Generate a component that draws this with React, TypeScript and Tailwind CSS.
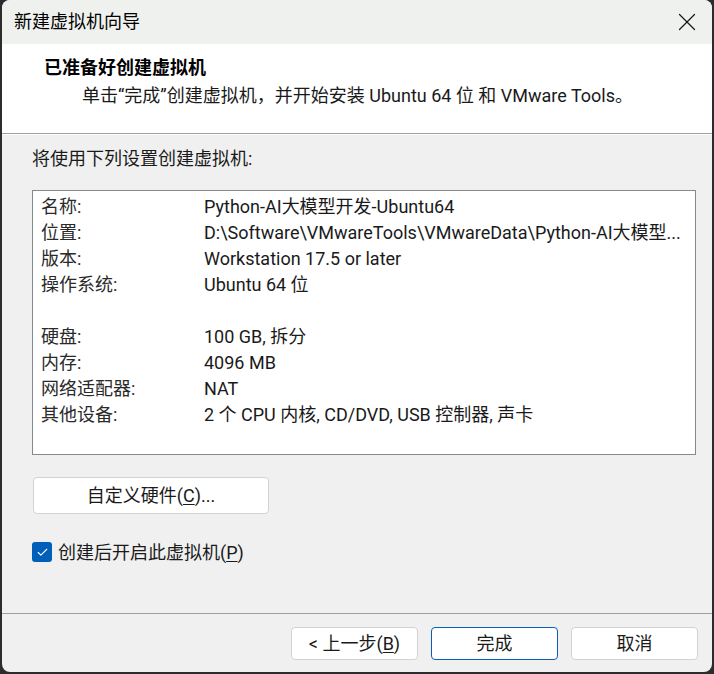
import { X, Check } from "lucide-react"

const font = { fontFamily: 'Roboto, "Noto Sans CJK SC", sans-serif' }

const rows: [string, string][] = [
  ["名称:", "Python-AI大模型开发-Ubuntu64"],
  ["位置:", "D:\\Software\\VMwareTools\\VMwareData\\Python-AI大模型..."],
  ["版本:", "Workstation 17.5 or later"],
  ["操作系统:", "Ubuntu 64 位"],
  ["", ""],
  ["硬盘:", "100 GB, 拆分"],
  ["内存:", "4096 MB"],
  ["网络适配器:", "NAT"],
  ["其他设备:", "2 个 CPU 内核, CD/DVD, USB 控制器, 声卡"],
]

function Btn({ children, primary }: { children: React.ReactNode; primary?: boolean }) {
  return (
    <button
      className={`w-[127px] h-[33px] rounded-[4px] bg-white text-[18px] leading-none text-[#1a1a1a] flex items-center justify-center ${
        primary ? "border border-[#0a5fb4]" : "border border-[#d3d3d3]"
      }`}
    >
      {children}
    </button>
  )
}

export default function App() {
  return (
    <div className="w-[714px] h-[674px] bg-[#2c2c2c] pl-[2px] pr-[2px] pb-[2px]" style={font}>
      <div className="w-[710px] h-[672px] rounded-[8px] overflow-hidden bg-[#f0f0f0] flex flex-col">
        {/* title bar */}
        <div className="h-[44px] bg-[#eff1ef] flex items-center justify-between pl-[12px] pr-[10px]">
          <span className="text-[18px] text-black leading-none">新建虚拟机向导</span>
          <X size={30} strokeWidth={1} className="text-[#1a1a1a]" />
        </div>

        {/* header */}
        <div className="h-[90px] bg-white pt-[12px] border-b border-[#a0a0a0]">
          <div className="pl-[42px] text-[18px] font-bold text-black leading-[24px]">已准备好创建虚拟机</div>
          <div className="pl-[80px] mt-[4px] text-[18px] text-[#1a1a1a] leading-[24px]">
            单击“完成”创建虚拟机，并开始安装 Ubuntu 64 位 和 VMware Tools。
          </div>
        </div>
        <div className="h-px bg-white" />

        {/* body */}
        <div className="flex-1 flex flex-col pl-[30px] pr-[16px]">
          <div className="mt-[12px] text-[18px] text-[#1a1a1a] leading-[24px]">将使用下列设置创建虚拟机:</div>

          <div className="mt-[19px] h-[265px] bg-white border border-[#838a91] pt-[3px]">
            {rows.map(([k, v], i) => (
              <div key={i} className="flex h-[26px] items-center text-[18px] leading-[26px] text-[#1a1a1a]">
                <span className="w-[171px] shrink-0 pl-[8px] text-[#2a2a2a]">{k}</span>
                <span className="whitespace-nowrap">{v}</span>
              </div>
            ))}
          </div>

          <button className="mt-[22px] w-[236px] h-[37px] rounded-[4px] bg-white border border-[#d3d3d3] text-[18px] leading-[26px] text-[#1a1a1a] flex items-center justify-center ml-px pt-[1px]">
            自定义硬件(<span className="underline underline-offset-2">C</span>)...
          </button>

          <label className="mt-[27px] h-[22px] flex items-center gap-[6px] text-[18px] leading-[22px] text-[#1a1a1a]">
            <span className="w-[20px] h-[20px] rounded-[3px] bg-[#005fb8] flex items-center justify-center">
              <Check size={13} strokeWidth={2} className="text-white" />
            </span>
            <span className="pt-[1px]">
              创建后开启此虚拟机(<span className="underline underline-offset-2">P</span>)
            </span>
          </label>
        </div>

        {/* footer */}
        <div className="h-[59px] border-t border-[#a0a0a0] flex items-start justify-end gap-[13px] pt-[13px] pr-[14px]">
          <Btn>
            &lt; 上一步(<span className="underline underline-offset-2">B</span>)
          </Btn>
          <Btn primary>完成</Btn>
          <Btn>取消</Btn>
        </div>
      </div>
    </div>
  )
}
